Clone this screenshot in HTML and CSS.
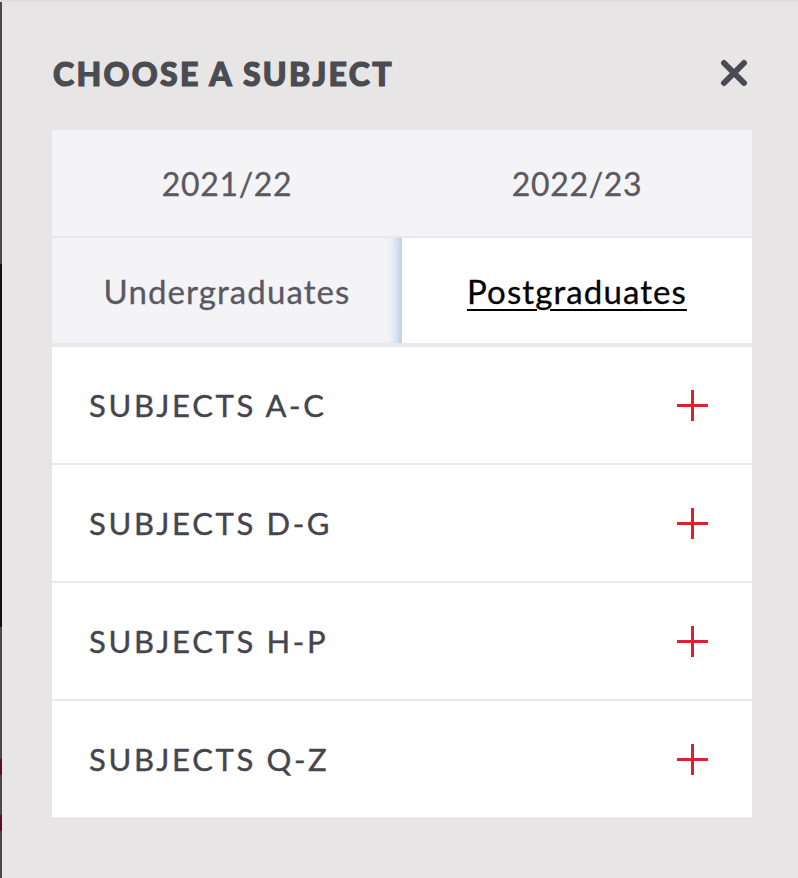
FILE: index.html
```html
<!DOCTYPE html>
<html lang="en">
<head>
<meta charset="utf-8">
<title>Choose a subject</title>
<link rel="stylesheet" href="styles.css">
</head>
<body>
<div class="topbar"></div>
<div class="page">
  <div class="edge"></div>
  <div class="modal">
    <div class="modal-head">
      <h2 class="modal-title">CHOOSE A SUBJECT</h2>
      <button class="close" aria-label="Close">
        <svg width="28" height="28" viewBox="0 0 28 28"><path d="M4 4 L24 24 M24 4 L4 24" stroke="#4a4b52" stroke-width="6" stroke-linecap="round"/></svg>
      </button>
    </div>
    <div class="card">
      <div class="tabs years">
        <div class="tab">2021/22</div>
        <div class="tab">2022/23</div>
      </div>
      <div class="tabs levels">
        <div class="tab level inactive">Undergraduates</div>
        <div class="tab level active"><span>Postgraduates</span></div>
      </div>
      <ul class="subjects">
        <li class="subject"><span>SUBJECTS A-C</span><i class="plus"></i></li>
        <li class="subject"><span>SUBJECTS D-G</span><i class="plus"></i></li>
        <li class="subject"><span>SUBJECTS H-P</span><i class="plus"></i></li>
        <li class="subject"><span>SUBJECTS Q-Z</span><i class="plus"></i></li>
      </ul>
    </div>
  </div>
</div>
</body>
</html>
```
FILE: styles.css
```css
* { box-sizing: border-box; }
html, body { margin: 0; padding: 0; }
body {
  background: #e7e5e6;
  font-family: Lato, "Open Sans", sans-serif;
  width: 798px;
  height: 878px;
  overflow: hidden;
}
.topbar {
  height: 2px;
  background: #dcdde2;
}
.page {
  display: flex;
  height: 876px;
}
.edge {
  width: 2px;
  flex: none;
  background: linear-gradient(to bottom,
    #4a4a4c 0, #4a4a4c 262px,
    #111 262px, #111 625px,
    #4a4a4c 625px, #4a4a4c 757px,
    #5c0f1c 757px, #5c0f1c 773px,
    #4a4a4c 773px, #4a4a4c 813px,
    #5c0f1c 813px, #5c0f1c 829px,
    #4a4a4c 829px);
}
.modal {
  flex: 1;
  padding: 0 46px 0 50px;
}
.modal-head {
  height: 128px;
  display: flex;
  align-items: center;
  justify-content: space-between;
  padding-top: 14px;
}
.modal-title {
  margin: 0 0 0 1px;
  font-family: Lato, sans-serif;
  font-weight: 900;
  font-size: 32px;
  letter-spacing: 2.3px;
  color: #4b4c52;
  -webkit-text-stroke: 1.2px #4b4c52;
}
.close {
  border: 0;
  background: none;
  padding: 0;
  margin-right: 4px;
  width: 28px;
  height: 28px;
  display: flex;
  cursor: pointer;
}
.card {
  background: #fff;
  border-bottom: 1px solid #ebebeb;
}
.tabs {
  display: grid;
  grid-template-columns: 350px 350px;
}
.years {
  height: 108px;
  background: #f4f3f5;
  border-bottom: 2px solid #e9e8ea;
}
.tab {
  display: flex;
  align-items: center;
  justify-content: center;
  font-size: 32px;
  color: #5a5862;
  letter-spacing: 0.7px;
  -webkit-text-stroke: 0.3px #5a5862;
}
.levels {
  height: 107px;
  border-bottom: 2px solid #e9e8ea;
}
.level {
  font-size: 33px;
  letter-spacing: 1.1px;
}
.level.inactive {
  background: #f4f3f5;
  box-shadow: inset -14px 0 12px -10px #a9c6e8;
}
.level.active {
  background: #fff;
  color: #000;
  -webkit-text-stroke: 0.3px #000;
}
.level.active span {
  text-decoration: underline;
  text-underline-offset: 5px;
  text-decoration-thickness: 2px;
}
.subjects {
  list-style: none;
  margin: 0;
  padding: 0;
}
.subject {
  height: 118px;
  border-top: 2px solid #e9e8ea;
  display: flex;
  align-items: center;
  justify-content: space-between;
  padding: 0 44px 0 37px;
  font-size: 31px;
  color: #45454d;
  letter-spacing: 2.65px;
  -webkit-text-stroke: 0.4px #45454d;
}
.plus {
  position: relative;
  width: 31px;
  height: 31px;
}
.plus::before, .plus::after {
  content: "";
  position: absolute;
  background: #e0202f;
}
.plus::before {
  left: 0; right: 0; top: 14px; height: 3px;
}
.plus::after {
  top: 0; bottom: 0; left: 14px; width: 3px;
}
```
